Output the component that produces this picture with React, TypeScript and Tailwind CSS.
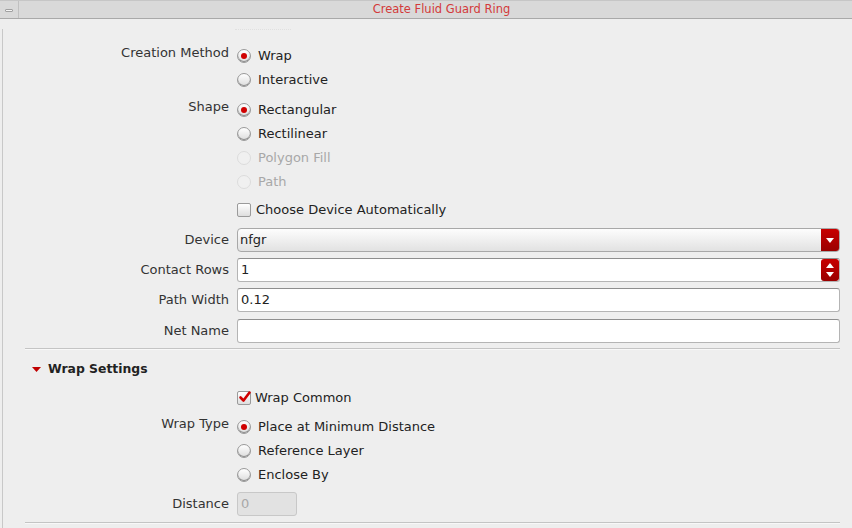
import type { ReactNode } from 'react';

function Radio({ checked, disabled }: { checked?: boolean; disabled?: boolean }) {
  return (
    <span
      className={`relative inline-flex h-[14px] w-[14px] shrink-0 items-center justify-center rounded-full border ${
        disabled
          ? 'border-[#dcdcdc] bg-[#f0f0f0]'
          : 'border-[#9a9a9a] bg-gradient-to-b from-[#ffffff] to-[#dcdcdc] shadow-[inset_0_-1px_0_#8c8c8c]'
      }`}
    >
      {checked && <span className="h-[6px] w-[6px] rounded-full bg-[#d00000]" />}
    </span>
  );
}

function Checkbox({ checked }: { checked?: boolean }) {
  return (
    <span className="relative inline-flex h-[14px] w-[14px] shrink-0 items-center justify-center rounded-[2px] border border-[#9a9a9a] bg-gradient-to-b from-[#ffffff] to-[#dedede]">
      {checked && (
        <svg viewBox="0 0 14 14" className="absolute -top-[2px] left-[0px] h-[14px] w-[14px]">
          <path d="M2.5 7.5 L5.5 10.5 L11.5 2.5" fill="none" stroke="#d00000" strokeWidth="2.6" strokeLinecap="round" strokeLinejoin="round" />
        </svg>
      )}
    </span>
  );
}

function Option({ label, checked, disabled }: { label: string; checked?: boolean; disabled?: boolean }) {
  return (
    <div className="flex h-6 items-center gap-[7px]">
      <Radio checked={checked} disabled={disabled} />
      <span className={disabled ? 'text-[#a8a8a8]' : 'text-[#222]'}>{label}</span>
    </div>
  );
}

function Row({ label, top, children }: { label?: string; top?: boolean; children: ReactNode }) {
  return (
    <div className="grid grid-cols-[226px_1fr] gap-x-2">
      <div className={`flex justify-end text-[#333] ${top ? 'items-start -mt-[1px]' : 'items-center'}`}>{label}</div>
      <div>{children}</div>
    </div>
  );
}

const inputCls =
  'flex h-6 items-center rounded-[3px] border border-[#b4b4b4] border-t-[#8e8e8e] bg-white px-[3px] text-[#222]';

export default function App() {
  return (
    <div className="h-[528px] w-[852px] overflow-hidden bg-[#eeeeee] font-['DejaVu_Sans',sans-serif] text-[13px]">
      {/* Title bar */}
      <div className="flex h-[19px] border-t border-b border-t-[#c6c6c6] border-b-[#a9a9a9] bg-[#d9d9d9]">
        <div className="flex w-[19px] items-center justify-center border-r border-[#c0c0c0]">
          <span className="mt-[2px] h-[3px] w-[8px] rounded-[1px] border border-[#a0a0a0] bg-[#f4f4f4]" />
        </div>
        <div className="flex flex-1 items-center justify-center pl-[12px] text-[11.5px] text-[#d33a3a]">Create Fluid Guard Ring</div>
      </div>

      <div className="relative ml-[2px] h-[509px] border-l border-[#c8c8c8] pr-[12px]">
        <div className="absolute right-[-1px] top-[14px] bottom-0 w-[1px] bg-[#8a8a8a]" />
        <div className="ml-[232px] mt-[10px] h-[1px] w-[56px] border-t border-dotted border-[#e0e0e0]" />

        <div className="mt-[14px] flex flex-col">
          <Row label="Creation Method" top>
            <Option label="Wrap" checked />
            <Option label="Interactive" />
          </Row>
          <div className="h-[6px]" />
          <Row label="Shape" top>
            <Option label="Rectangular" checked />
            <Option label="Rectilinear" />
            <Option label="Polygon Fill" disabled />
            <Option label="Path" disabled />
          </Row>
          <div className="h-[4px]" />
          <Row>
            <div className="flex h-6 items-center gap-[5px]">
              <Checkbox />
              <span className="text-[#222]">Choose Device Automatically</span>
            </div>
          </Row>
          <div className="h-[6px]" />
          <Row label="Device">
            <div className="flex h-6 items-center overflow-hidden rounded-[4px] border border-[#a8a8a8] bg-gradient-to-b from-[#fdfdfd] to-[#e2e2e2] text-[#222]">
              <span className="flex-1 pl-[2px]">nfgr</span>
              <span className="flex h-full w-[18px] items-center justify-center bg-gradient-to-b from-[#c80000] to-[#9a0000]">
                <svg viewBox="0 0 8 5" className="h-[5px] w-[8px]">
                  <path d="M0 0 H8 L4 5 Z" fill="#fff" />
                </svg>
              </span>
            </div>
          </Row>
          <div className="h-[6px]" />
          <Row label="Contact Rows">
            <div className="flex h-6 items-center overflow-hidden rounded-[3px] border border-[#b4b4b4] border-t-[#8e8e8e] bg-white text-[#222]">
              <span className="flex-1 pl-[3px]">1</span>
              <span className="flex h-full w-[18px] flex-col items-center justify-center gap-[4px] rounded-[3px] bg-gradient-to-b from-[#c80000] to-[#9a0000]">
                <svg viewBox="0 0 8 5" className="h-[5px] w-[8px]">
                  <path d="M0 5 H8 L4 0 Z" fill="#fff" />
                </svg>
                <svg viewBox="0 0 8 5" className="h-[5px] w-[8px]">
                  <path d="M0 0 H8 L4 5 Z" fill="#fff" />
                </svg>
              </span>
            </div>
          </Row>
          <div className="h-[6px]" />
          <Row label="Path Width">
            <div className={inputCls}>0.12</div>
          </Row>
          <div className="h-[7px]" />
          <Row label="Net Name">
            <div className={inputCls} />
          </Row>

          <div className="ml-[22px] mt-[5px] h-[2px] border-t border-b border-t-[#c4c4c4] border-b-[#f8f8f8]" />

          <div className="mt-[9px] flex h-[20px] items-center gap-[7px] pl-[29px]">
            <svg viewBox="0 0 9 5" className="h-[5px] w-[9px]">
              <path d="M0 0 H9 L4.5 5 Z" fill="#c00000" />
            </svg>
            <span className="text-[12.4px] font-bold text-[#222]">Wrap Settings</span>
          </div>
          <div className="h-[7px]" />
          <Row>
            <div className="flex h-6 items-center gap-[4px]">
              <Checkbox checked />
              <span className="text-[#222]">Wrap Common</span>
            </div>
          </Row>
          <div className="h-[5px]" />
          <Row label="Wrap Type" top>
            <Option label="Place at Minimum Distance" checked />
            <Option label="Reference Layer" />
            <Option label="Enclose By" />
          </Row>
          <div className="h-[5px]" />
          <Row label="Distance">
            <div className="flex h-6 w-[60px] items-center rounded-[3px] border border-[#c8c8c8] bg-[#e2e2e2] px-[3px] text-[#a8a8a8]">0</div>
          </Row>
          <div className="ml-[22px] mt-[6px] h-[2px] border-t border-b border-t-[#c4c4c4] border-b-[#f8f8f8]" />
        </div>
      </div>
    </div>
  );
}
